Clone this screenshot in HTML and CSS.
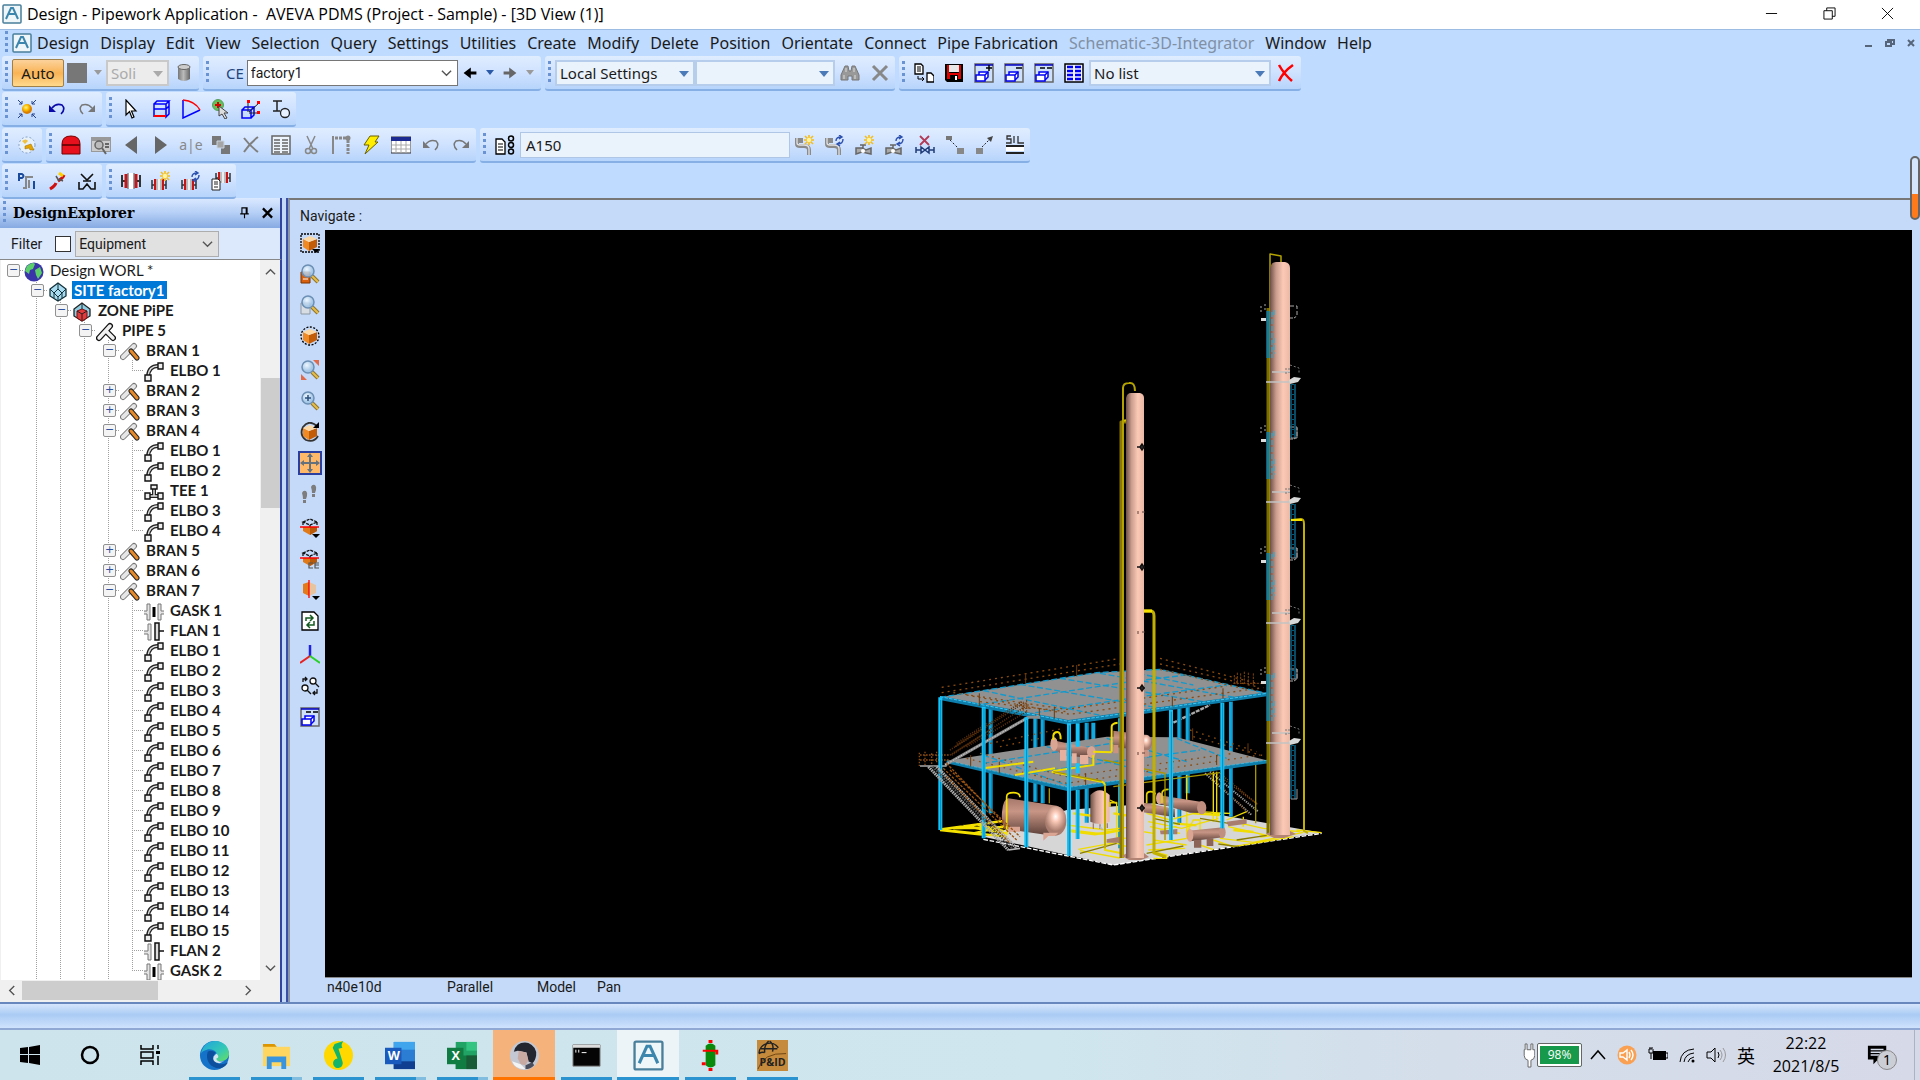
FILE: index.html
```
<!DOCTYPE html>
<html lang="en">
<head>
	<meta charset="UTF-8">
	<meta name="viewport" content="width=device-width, initial-scale=1.0">
	<title>Design - Pipework Application - AVEVA PDMS (Project - Sample) - [3D View (1)]</title>
	<link rel="stylesheet" href="styles.css">
</head>
<body>

<!-- icon sprite -->
<svg class="sprite" aria-hidden="true">
	<defs>
		<linearGradient id="steel"><stop offset="0" stop-color="#777"/><stop offset=".45" stop-color="#bbb"/><stop offset="1" stop-color="#666"/></linearGradient>
		<linearGradient id="tower"><stop offset="0" stop-color="#6d4f46"/><stop offset=".3" stop-color="#c99c8c"/><stop offset=".65" stop-color="#fcc9b6"/><stop offset="1" stop-color="#eab9a6"/></linearGradient>
		<linearGradient id="vessel" x2="0" y2="1"><stop offset="0" stop-color="#a5796c"/><stop offset=".35" stop-color="#c89585"/><stop offset="1" stop-color="#5c4039"/></linearGradient>
		<radialGradient id="cap" cx=".5" cy=".35"><stop offset="0" stop-color="#fff"/><stop offset=".35" stop-color="#fbc9b7"/><stop offset="1" stop-color="#a87c6e"/></radialGradient>
		<radialGradient id="sunball" cx=".4" cy=".35"><stop offset="0" stop-color="#fff29a"/><stop offset=".5" stop-color="#ffc400"/><stop offset="1" stop-color="#d97c00"/></radialGradient>
		<radialGradient id="lens" cx=".4" cy=".35"><stop offset="0" stop-color="#f4fbff"/><stop offset="1" stop-color="#9fc3e4"/></radialGradient>
		<linearGradient id="edge1" x2="1" y2="1"><stop offset="0" stop-color="#1fa3e0"/><stop offset=".6" stop-color="#35c9b4"/><stop offset="1" stop-color="#6be05a"/></linearGradient>
	</defs>

	<symbol id="aveva" viewBox="0 0 20 20"><rect x="1" y="1" width="18" height="18" rx="1" fill="#eef6fa" stroke="#4a7f9b" stroke-width="1.5"/><path d="M4 15 9 4h2l5 11M6 10h8" fill="none" stroke="#3c86ad" stroke-width="2"/></symbol>
	<symbol id="cylinder" viewBox="0 0 20 20"><path d="M4 4v12q6 4 12 0V4z" fill="url(#steel)"/><ellipse cx="10" cy="4" rx="6" ry="2.5" fill="#ccc" stroke="#666"/></symbol>
	<symbol id="arrow-l" viewBox="0 0 20 20"><path d="M2 10 11 3v5h7v4h-7v5z"/></symbol>
	<symbol id="arrow-r" viewBox="0 0 20 20"><path d="M18 10 9 3v5H2v4h7v5z" fill="#666"/></symbol>
	<symbol id="binoculars" viewBox="0 0 20 20"><path d="M1 17v-5L5 3h3l1 5h2l1-5h3l4 9v5h-7v-4H8v4z" fill="#999" stroke="#777"/><path d="M4 12v4M15 12v4M6 5v4M14 5v4" stroke="#ddd"/></symbol>
	<symbol id="x-gray" viewBox="0 0 20 20"><path d="M3 3l14 14M17 3 3 17" stroke="#888" stroke-width="3"/></symbol>
	<symbol id="x-thin" viewBox="0 0 20 20"><path d="M3 3q6 8 14 14M17 2Q9 8 3 17" stroke="#808080" stroke-width="2" fill="none"/></symbol>
	<symbol id="x-red" viewBox="0 0 20 20"><path d="M3 2q5 9 13 16M17 2Q7 9 3 18" stroke="#f00" stroke-width="2.5" fill="none"/></symbol>
	<symbol id="copy" viewBox="0 0 20 20"><path d="M1 1h6l2 2v8H1z" fill="#fff" stroke="#000" stroke-width="1.3"/><path d="M3 4h4M3 6h4M3 8h4" stroke="#000"/><path d="M13 10h4l3 3v6h-7z" fill="#fff" stroke="#000" stroke-width="1.3"/><path d="M4 13v3h6m-2-2 2 2-2 2" fill="none" stroke="#000"/></symbol>
	<symbol id="floppy" viewBox="0 0 20 20"><path d="M1 1h18v18H3l-2-2z" fill="#000"/><path d="M3 2h2v8h10V2h2v14H3z" fill="#e00000"/><path d="M5 2h10v7H5z" fill="#e8e8e8"/><path d="M6 12h8v6H6z" fill="#000"/><path d="M11 13h2v4h-2z" fill="#fff"/></symbol>
	<symbol id="win" viewBox="0 0 20 20"><path d="M1 1h18v18H1z" fill="#cfe0fa" stroke="#666" stroke-width="1.5"/><path d="M1 2h18" stroke="#0000c8" stroke-width="1.5"/><path d="M5 12V9h9v5l-3 3" fill="#fff" stroke="#0000f0" stroke-width="1.5"/><path d="M2 12h9v6H2zM11 12l3-3" fill="#fff" stroke="#0000f0" stroke-width="1.5"/></symbol>
	<symbol id="win-add" viewBox="0 0 20 20"><use href="#win"/><path d="M12 5h6M15 2v6" stroke="#000" stroke-width="1.5"/></symbol>
	<symbol id="win-del" viewBox="0 0 20 20"><use href="#win"/><path d="M12 5h6" stroke="#000" stroke-width="1.5"/></symbol>
	<symbol id="win-all" viewBox="0 0 20 20"><use href="#win"/><path d="M6 5h5M13 5h5" stroke="#000" stroke-width="1.5"/></symbol>
	<symbol id="list-blue" viewBox="0 0 20 20"><path d="M1 1h18v18H1z" fill="#f0f5ff" stroke="#000" stroke-width="1.5"/><path d="M3 4h6M3 8h6M3 12h6M3 16h6M11 4h6M11 8h6M11 12h6M11 16h6" stroke="#0000f0" stroke-width="2.5"/></symbol>

	<symbol id="sun" viewBox="0 0 20 20"><circle cx="10" cy="10" r="5" fill="url(#sunball)"/><path d="M1 1l4 4M2 5h3V2M19 1l-4 4M18 5h-3V2M1 19l4-4M2 15h3v3M19 19l-4-4M18 15h-3v3" fill="none" stroke="#24418c"/></symbol>
	<symbol id="undo" viewBox="0 0 20 20"><path d="M5 9q4-5 10-3 4 4-1 9" fill="none" stroke="#0a0aa8" stroke-width="1.6"/><path d="M2 6v7h7z" fill="#0a0aa8"/></symbol>
	<symbol id="undo-g" viewBox="0 0 20 20"><path d="M5 9q4-5 10-3 4 4-1 9" fill="none" stroke="#777" stroke-width="1.5"/><path d="M2 6v7h7z" fill="#777"/></symbol>
	<symbol id="redo" viewBox="0 0 20 20"><path d="M15 9Q11 4 5 6q-4 4 1 9" fill="none" stroke="#777" stroke-width="1.5"/><path d="M18 6v7h-7z" fill="#777"/></symbol>
	<symbol id="cursor" viewBox="0 0 20 20"><path d="M5 1v15l3.5-3.5L11 19l2-1-2.5-6H15z" fill="#fff" stroke="#000" stroke-width="1.2"/></symbol>
	<symbol id="box-sel" viewBox="0 0 20 20"><path d="M3 5h12v5H3zM3 5l3-3h12l-3 3M18 2v13l-3 3V5M3 10v8M15 10l3-3" fill="none" stroke="#00f" stroke-width="1.5"/><path d="M3 17h12" stroke="#f00" stroke-width="2"/></symbol>
	<symbol id="fan" viewBox="0 0 20 20"><path d="M2 1v18l17-8" fill="none" stroke="#00f" stroke-width="1.5"/><path d="M2 1q12 1 17 10" fill="none" stroke="#f00" stroke-width="1.5"/></symbol>
	<symbol id="pick-add" viewBox="0 0 20 20"><circle cx="7" cy="6" r="5.5" fill="#5fc15a" stroke="#5a9e60"/><path d="M4 6h6M7 3v6" stroke="#d00" stroke-width="2"/><path d="M8 7v10l3-2 3 5 2-1-3-5h4z" fill="#ddd" stroke="#444"/></symbol>
	<symbol id="axes-box" viewBox="0 0 20 20"><path d="M1 11h9v8H1zM1 11l3-3h9l-3 3M13 8v8l-3 3" fill="none" stroke="#00f" stroke-width="1.5"/><path d="M7 13V3M8 13l10-9M8 14h10" stroke="#222" fill="none"/><path d="M6 1h3v3H6zM16 2h3v3h-3zM16 12h3v3h-3z" fill="#f00"/></symbol>
	<symbol id="i-o" viewBox="0 0 20 20"><path d="M2 2h9M6 2v10M2 12h7" stroke="#222" stroke-width="1.5"/><circle cx="14" cy="14" r="4.5" fill="#e7f1ff" stroke="#222" stroke-width="1.3"/></symbol>

	<symbol id="globe-key" viewBox="0 0 20 20"><circle cx="10" cy="10" r="8" fill="#e6f0fb" stroke="#7d9cc2" stroke-dasharray="2 2"/><path d="M5 6q4-3 6 0l-3 3z" fill="#f0c040"/><path d="M8 11l6-2 3 6h-4l-1-2-4 1z" fill="#e5a400" stroke="#9a6a00" stroke-width=".5"/></symbol>
	<symbol id="dome" viewBox="0 0 20 20"><path d="M1 19V9q0-8 9-8t9 8v10z" fill="#e8101c" stroke="#700"/><path d="M1 10h18" stroke="#500" stroke-width="1.5"/></symbol>
	<symbol id="find-win" viewBox="0 0 20 20"><path d="M0 2h20v15H0z" fill="#999"/><path d="M1 6h18v10H1z" fill="#ccc"/><circle cx="8" cy="10" r="4" fill="#bbb" stroke="#666" stroke-width="1.5"/><path d="M11 13l4 6M14 9h4M14 12h4" stroke="#666" stroke-width="2"/></symbol>
	<symbol id="tri-l" viewBox="0 0 20 20"><path d="M16 1v18L4 10z" fill="#666"/></symbol>
	<symbol id="tri-r" viewBox="0 0 20 20"><path d="M4 1v18l12-9z" fill="#666"/></symbol>
	<symbol id="squares" viewBox="0 0 20 20"><path d="M1 1h9v9H1zM10 10h9v9h-9z" fill="#777"/><path d="M6 6h7v7H6z" fill="#a5a5a5" stroke="#c9d4e2"/></symbol>
	<symbol id="table-g" viewBox="0 0 20 20"><path d="M1 1h18v18H1z" fill="#eef4fc" stroke="#666" stroke-width="1.5"/><path d="M3 5h6M3 8h6M3 11h6M3 14h6M3 17h6M11 5h6M11 8h6M11 11h6M11 14h6M11 17h6" stroke="#666" stroke-width="1.5"/></symbol>
	<symbol id="scissors" viewBox="0 0 20 20"><path d="M6 1l6 13M14 1 8 14" stroke="#888" stroke-width="1.5"/><circle cx="7" cy="16" r="2.5" fill="none" stroke="#888" stroke-width="1.5"/><circle cx="13" cy="16" r="2.5" fill="none" stroke="#888" stroke-width="1.5"/></symbol>
	<symbol id="dims" viewBox="0 0 20 20"><path d="M4 3h12M17 5v14" stroke="#888" stroke-width="3" stroke-dasharray="3 1"/><path d="M2 1v18" stroke="#888" stroke-width="2"/><circle cx="17" cy="3" r="2.5" fill="#888"/></symbol>
	<symbol id="bolt" viewBox="0 0 20 20"><path d="M9 1h9l-4 6h3L4 19l4-9H3z" fill="#ffee00" stroke="#6b6000"/></symbol>
	<symbol id="grid" viewBox="0 0 20 20"><path d="M0 2h20v16H0z" fill="#fff" stroke="#333"/><path d="M0 2h20v4H0z" fill="#1b2a90"/><path d="M1 10h18M1 14h18M5 6v12M10 6v12M15 6v12" stroke="#aaa"/></symbol>
	<symbol id="spec" viewBox="0 0 20 20"><path d="M1 4h6l3 3v12H1z" fill="#fff" stroke="#000" stroke-width="1.3"/><path d="M3 9h5M3 12h5M3 15h5" stroke="#000"/><g fill="none" stroke="#000" stroke-width="1.5"><circle cx="16" cy="3.5" r="2.5"/><circle cx="16" cy="10" r="2.5"/><circle cx="16" cy="16.5" r="2.5"/></g></symbol>
	<symbol id="star" viewBox="0 0 20 20"><path d="M14 0v10M9 5h10M10 1l8 8M18 1l-8 8" stroke="#f5bd18" stroke-width="1.6"/><circle cx="14" cy="5" r="2.2" fill="#fff4a0"/></symbol>
	<symbol id="cycle" viewBox="0 0 20 20"><path d="M11 6q0-4 5-4M14 0l3 2-3 2M18 4q0 5-5 5M15 7l-3 2 3 2" fill="none" stroke="#2c50ad" stroke-width="1.4"/></symbol>
	<symbol id="pipe-g" viewBox="0 0 20 20"><path d="M2 3v6q0 2 3 2h4q5 0 5 4v5M6 3v5" fill="none" stroke="#8a8a8a" stroke-width="4"/><path d="M2 3v5q0 2 3 2h4q5 0 5 4v6" fill="none" stroke="#e2e2e2" stroke-width="1.3"/></symbol>
	<symbol id="pipe-new" viewBox="0 0 20 20"><use href="#pipe-g"/><use href="#star"/></symbol>
	<symbol id="pipe-mod" viewBox="0 0 20 20"><use href="#pipe-g"/><use href="#cycle"/></symbol>
	<symbol id="valve" viewBox="0 0 20 20"><path d="M1 13v6l6-2 9 2v-6l-5 2-4-2zM8 14v-4M5 10h6" fill="#aaa" stroke="#666" stroke-width="1.5"/><circle cx="8" cy="16" r="2" fill="#fff"/></symbol>
	<symbol id="comp-new" viewBox="0 0 20 20"><use href="#valve"/><use href="#star"/></symbol>
	<symbol id="comp-mod" viewBox="0 0 20 20"><use href="#valve"/><use href="#cycle"/></symbol>
	<symbol id="comp-del" viewBox="0 0 20 20"><path d="M5 1l9 9M14 1 5 10" stroke="#b33a56" stroke-width="1.8"/><path d="M1 12v6M19 12v6M1 15h5M14 15h5M6 12v6l8-6v6z" fill="none" stroke="#203c78" stroke-width="1.5"/></symbol>
	<symbol id="drop" viewBox="0 0 20 20"><path d="M1 1h6v4H1z" fill="#777"/><path d="M5 5l9 9" stroke="#222" stroke-dasharray="2 2"/><path d="M12 13h7v6h-7z" fill="#888"/></symbol>
	<symbol id="rise" viewBox="0 0 20 20"><path d="M1 13h7v6H1z" fill="#888"/><path d="M7 12l9-9" stroke="#222" stroke-dasharray="2 1.5"/><path d="M12 3l6-2-2 6z" fill="#444"/></symbol>
	<symbol id="slope" viewBox="0 0 20 20"><path d="M6 1H2v3h4v4H1M9 1v7M13 1v7h6" fill="none" stroke="#333" stroke-width="1.3"/><path d="M1 11h18M1 18h18" stroke="#222" stroke-width="2"/><path d="M1 14h18" stroke="#fff" stroke-width="4"/></symbol>

	<symbol id="p-i" viewBox="0 0 20 20"><path d="M2 10V3h3q3 2 0 4H2" fill="none" stroke="#1a4a9c" stroke-width="2"/><path d="M6 17h3V6h7M12 17V9" fill="none" stroke="#888" stroke-width="2"/><path d="M17 10v8" stroke="#1a4a9c" stroke-width="2"/></symbol>
	<symbol id="break" viewBox="0 0 20 20"><path d="M3 18q5-3 6-6M11 10q5-3 6-6" stroke="#d01010" stroke-width="3" fill="none"/><path d="M9 5l3 5M12 8l4 2" stroke="#555" stroke-width="1.5"/><path d="M12 2l4 3" stroke="#ffd000" stroke-width="3"/></symbol>
	<symbol id="weld" viewBox="0 0 20 20"><path d="M4 3l6 6 6-6" fill="none" stroke="#111" stroke-width="1.6"/><path d="M2 11v7h4l4-5 4 5h4v-7" fill="none" stroke="#111" stroke-width="1.6"/><path d="M6 10h8" stroke="#111" stroke-width="1.5"/></symbol>
	<symbol id="flange" viewBox="0 0 20 20"><path d="M1 4v12M1 10h3" stroke="#333" stroke-width="2"/><path d="M5 3v14M15 3v14" stroke="#c81414" stroke-width="3"/><path d="M10 2v16" stroke="#fff" stroke-width="5"/><path d="M7 2v16M13 2v16" stroke="#555"/><path d="M19 4v12M16 10h3" stroke="#333" stroke-width="2"/></symbol>
	<symbol id="fl" viewBox="0 0 20 20"><path d="M1 9v9M1 14h3M15 9v9M12 14h3" stroke="#333" stroke-width="1.5"/><path d="M4 8v11M12 8v11" stroke="#c81414" stroke-width="2"/><path d="M8 8v11" stroke="#eee" stroke-width="5"/><path d="M6 8v11M10 8v11" stroke="#888"/></symbol>
	<symbol id="fl-new" viewBox="0 0 20 20"><use href="#fl"/><use href="#star"/></symbol>
	<symbol id="fl-mod" viewBox="0 0 20 20"><use href="#fl"/><use href="#cycle"/></symbol>
	<symbol id="fl-doc" viewBox="0 0 20 20"><use href="#fl" x="4" y="-7"/><path d="M1 8h6l2 2v9H1z" fill="#fff" stroke="#222"/><path d="M3 11h4M3 13h4M3 16h4" stroke="#222"/></symbol>

	<symbol id="pin" viewBox="0 0 12 14"><path d="M3 1h6v7H3zM1 8h10M6 8v5M8 1v7" fill="none" stroke="#000" stroke-width="1.3"/></symbol>
	<symbol id="close" viewBox="0 0 12 12"><path d="M1 1l10 10M11 1 1 11" stroke="#000" stroke-width="2.5"/></symbol>
	<symbol id="chev" viewBox="0 0 12 12"><path d="M1 3l5 5 5-5" fill="none" stroke="#555" stroke-width="1.5"/></symbol>

	<symbol id="world" viewBox="0 0 20 20"><circle cx="10" cy="10" r="9.5" fill="#3a35a8"/><path d="M3 4q6-5 8-2L9 7l-3 1-1 4-4-3zM11 8l5-3 2 6-4 6-2-4z" fill="#5bd06a"/></symbol>
	<symbol id="site" viewBox="0 0 20 20"><path d="M10 1 2 7v7l8 5 8-5V7z" fill="#a9dcf0" stroke="#12303a" stroke-width="1.3"/><path d="M10 1v6L6 11 2 7M10 7l4 4 4-4M6 11v5M14 11v5M6 11l4 4 4-4M10 15v4" fill="none" stroke="#12303a"/></symbol>
	<symbol id="zone" viewBox="0 0 20 20"><path d="M10 1 2 7v7l8 5 8-5V7z" fill="#8ecde2" stroke="#222" stroke-width="1.3"/><path d="M5 9l5-2 5 2v7l-5 3-5-3z" fill="#e33b3b" stroke="#7a1111"/><path d="M10 1v6M5 9l5 3 5-3M10 12v6" fill="none" stroke="#222"/></symbol>
	<symbol id="pipe" viewBox="0 0 20 20"><path d="M3 16 14 4M10 9l7 7" stroke="#111" stroke-width="6" stroke-linecap="round"/><path d="M3 16 14 4M10 9l7 7" stroke="#f1f1f1" stroke-width="3.5" stroke-linecap="round"/></symbol>
	<symbol id="bran" viewBox="0 0 20 20"><path d="M3 15 14 4" stroke="#777" stroke-width="6" stroke-linecap="round"/><path d="M3 15 14 4" stroke="#e6e6e6" stroke-width="4" stroke-linecap="round"/><path d="M11 9l6 7" stroke="#222" stroke-width="5" stroke-linecap="round"/><path d="M11 9l6 7" stroke="#e58a2a" stroke-width="3" stroke-linecap="round"/></symbol>
	<symbol id="elbo" viewBox="0 0 20 20"><path d="M4 14Q5 4 14 4" fill="none" stroke="#222" stroke-width="4"/><path d="M4 14Q5 4 14 4" fill="none" stroke="#ddd" stroke-width="1.5"/><path d="M1 13h6v6H1zM14 1h5v6h-5z" fill="#eee" stroke="#111" stroke-width="1.4"/></symbol>
	<symbol id="tee" viewBox="0 0 20 20"><path d="M6 14h8M10 6v8" stroke="#222" stroke-width="4"/><path d="M6 14h8M10 6v8" stroke="#ddd" stroke-width="1.5"/><path d="M1 11h5v6H1zM14 11h5v6h-5zM7 3h6v4H7z" fill="#eee" stroke="#111" stroke-width="1.4"/></symbol>
	<symbol id="gask" viewBox="0 0 20 20"><path d="M0 9h3V2h3v16H3v-6H0M20 9h-3V2h-3v16h3v-6h3" fill="#e4e4e4" stroke="#777"/><path d="M10 5v10" stroke="#000" stroke-width="3"/></symbol>
	<symbol id="flan" viewBox="0 0 20 20"><path d="M0 9h4V2h3v16H4v-6H0" fill="#e4e4e4" stroke="#777"/><path d="M11 1h4v17h-4zM15 9h5" fill="#ddd" stroke="#111" stroke-width="1.5"/></symbol>

	<symbol id="cube" viewBox="0 0 20 20"><path d="M3 6v8l6 4V9z" fill="#f08a24"/><path d="M9 9v9l8-4V6z" fill="#c25c08"/><path d="M3 6l7-3 7 3-8 3z" fill="#ffd9a3"/></symbol>
	<symbol id="glass" viewBox="0 0 20 20"><path d="M12 12l6 6" stroke="#8f7430" stroke-width="4"/><path d="M12 12l6 6" stroke="#e6bd48" stroke-width="2"/><circle cx="8" cy="7" r="6" fill="url(#lens)" fill-opacity=".85" stroke="#6c8fb4" stroke-width="1.5"/></symbol>
	<symbol id="v-fence" viewBox="0 0 20 20"><path d="M1 1h18v18H1z" fill="none" stroke="#000" stroke-width="1.3" stroke-dasharray="2 1"/><use href="#cube"/><path d="M12 16h8l-4 4z"/></symbol>
	<symbol id="v-zoombox" viewBox="0 0 20 20"><path d="M1 8h9v11H1z" fill="#d9600c" stroke="#7c3500"/><path d="M3 15h5" stroke="#fff"/><use href="#glass"/></symbol>
	<symbol id="v-zoomdoc" viewBox="0 0 20 20"><path d="M1 8h9v11H1z" fill="#d8dde4" stroke="#8d97a3"/><use href="#glass"/></symbol>
	<symbol id="v-round" viewBox="0 0 20 20"><circle cx="10" cy="10" r="9" fill="none" stroke="#000" stroke-width="1.3" stroke-dasharray="2 1.5"/><use href="#cube"/></symbol>
	<symbol id="v-extents" viewBox="0 0 20 20"><path d="M13 0h6v6zM1 14v6h6z" fill="#e0694a"/><use href="#glass"/></symbol>
	<symbol id="v-zoom" viewBox="0 0 20 20"><use href="#glass"/><path d="M5 7h6M8 4v6" stroke="#2b4f7c" stroke-width="1.5"/></symbol>
	<symbol id="v-rotate" viewBox="0 0 20 20"><path d="M17 4Q9-3 3 5q-4 8 3 13 8 3 12-4" fill="none" stroke="#333" stroke-width="1.8"/><use href="#cube"/><path d="M19 0v6h-6z"/></symbol>
	<symbol id="v-pan" viewBox="0 0 20 20"><path d="M10 3v14M3 10h14" stroke="#66717e" stroke-width="2"/><path d="M10 0l3 4H7zM10 20l3-4H7zM0 10l4-3v6zM20 10l-4-3v6z" fill="#66717e"/></symbol>
	<symbol id="v-walk" viewBox="0 0 20 20"><path d="M11 3q1-3 4-2 2 2 1 5l-1 3h-3q0-3-1-6zM2 9q1-3 4-2 2 2 1 5l-1 3H3q0-3-1-6zM12 10h3v3h-3zM3 16h3v3H3z" fill="#7d7d7d"/></symbol>
	<symbol id="v-clip" viewBox="0 0 20 20"><path d="M3 9v4l7 4 7-4V9z" fill="#e07a18"/><path d="M10 9v8l7-4V9z" fill="#b95a0a"/><path d="M3 4l7-3 7 3-7 3zM3 4v4M17 4v4M10 7v2" fill="none" stroke="#111" stroke-width="1.3" stroke-dasharray="3 1"/><path d="M0 9h19" stroke="#f00" stroke-width="1.5"/></symbol>
	<symbol id="v-clipdrop" viewBox="0 0 20 20"><use href="#v-clip"/><path d="M12 16h8l-4 4z"/></symbol>
	<symbol id="v-clipce" viewBox="0 0 20 20"><use href="#v-clip"/><path d="M13 14H9v5h4M19 14h-4v5h4M15 16h4" fill="none" stroke="#555" stroke-width="1.2"/></symbol>
	<symbol id="v-section" viewBox="0 0 20 20"><path d="M3 4l6-2v14l-6-3z" fill="#e57a1a"/><path d="M9 2l7 3v8l-7 3z" fill="#e8c3a0"/><path d="M9 0v18" stroke="#f00" stroke-width="1.3"/><path d="M12 16h8l-4 4z"/></symbol>
	<symbol id="v-refresh" viewBox="0 0 20 20"><path d="M2 1h12l4 4v14H2z" fill="#fff" stroke="#000" stroke-width="1.3"/><path d="M6 10V7h6M10 4l3 3-3 3M14 10v4H8M10 11l-3 3 3 3" fill="none" stroke="#145a20" stroke-width="1.5"/></symbol>
	<symbol id="v-axes" viewBox="0 0 20 20"><path d="M10 11V0" stroke="#2020e0" stroke-width="2.5"/><path d="M10 11 0 18" stroke="#e82020" stroke-width="2"/><path d="M10 11l10 7" stroke="#28d028" stroke-width="2"/></symbol>
	<symbol id="v-links" viewBox="0 0 20 20"><g fill="#fff" stroke="#111" stroke-width="1.3"><circle cx="13" cy="5" r="3"/><circle cx="5" cy="12" r="3"/><path d="M15 7l4 4M7 14l4 4M3 6V3h4M5 1l2 2-2 2M17 13v4h-4M15 15l-2 2 2 2" fill="none"/></g></symbol>
</svg>

<header class="titlebar">
	<svg class="ico"><use href="#aveva"/></svg>
	<h1>Design - Pipework Application - &nbsp;AVEVA PDMS (Project - Sample) - [3D View (1)]</h1>
	<div class="winctl">
		<button aria-label="Minimize"><svg viewBox="0 0 14 14"><path d="M1 7h12"/></svg></button>
		<button aria-label="Restore"><svg viewBox="0 0 14 14"><path d="M1 4h9v9H1zM4 4V1h9v9h-3"/></svg></button>
		<button aria-label="Close"><svg viewBox="0 0 14 14"><path d="M1 1l12 12M13 1 1 13"/></svg></button>
	</div>
</header>

<nav class="menubar">
	<i class="grip"></i>
	<svg class="ico"><use href="#aveva"/></svg>
	<button>Design</button>
	<button>Display</button>
	<button>Edit</button>
	<button>View</button>
	<button>Selection</button>
	<button>Query</button>
	<button>Settings</button>
	<button>Utilities</button>
	<button>Create</button>
	<button>Modify</button>
	<button>Delete</button>
	<button>Position</button>
	<button>Orientate</button>
	<button>Connect</button>
	<button>Pipe Fabrication</button>
	<button disabled>Schematic-3D-Integrator</button>
	<button>Window</button>
	<button>Help</button>
	<div class="mdictl">
		<svg viewBox="0 0 10 10"><path d="M1 8h7"/></svg>
		<svg viewBox="0 0 10 10"><path d="M1 4h5v4H1zM3 4V2h6v4H7"/></svg>
		<svg viewBox="0 0 10 10"><path d="M2 2l6 6M8 2 2 8"/></svg>
	</div>
</nav>

<div class="toolbars">
	<div class="row">
		<div class="bar">
			<i class="grip"></i>
			<button class="auto">Auto</button>
			<button class="swatch" aria-label="Colour"></button>
			<i class="dd off"></i>
			<span class="combo off soli"><select aria-label="Representation" disabled><option>Soli</option></select></span>
			<button class="tb" aria-label="Cylinder"><svg><use href="#cylinder"/></svg></button>
		</div>
		<div class="bar ce">
			<i class="grip"></i>
			<label for="ce">CE</label>
			<span class="cebox"><select id="ce"><option>factory1</option></select><svg><use href="#chev"/></svg></span>
			<button class="tb sm" aria-label="Back"><svg><use href="#arrow-l"/></svg></button><i class="dd"></i>
			<button class="tb sm" aria-label="Forward"><svg><use href="#arrow-r"/></svg></button><i class="dd off"></i>
		</div>
		<div class="bar">
			<i class="grip"></i>
			<span class="combo local"><select aria-label="Settings"><option>Local Settings</option></select></span>
			<span class="combo local"><select aria-label="Search"><option></option></select></span>
			<button class="tb" aria-label="Find"><svg><use href="#binoculars"/></svg></button>
			<button class="tb" aria-label="Clear"><svg><use href="#x-gray"/></svg></button>
		</div>
		<div class="bar">
			<i class="grip"></i>
			<button class="tb" aria-label="Copy"><svg><use href="#copy"/></svg></button>
			<button class="tb" aria-label="Save"><svg><use href="#floppy"/></svg></button>
			<button class="tb" aria-label="Add to view"><svg><use href="#win-add"/></svg></button>
			<button class="tb" aria-label="Remove from view"><svg><use href="#win-del"/></svg></button>
			<button class="tb" aria-label="Remove all"><svg><use href="#win-all"/></svg></button>
			<button class="tb" aria-label="Lists"><svg><use href="#list-blue"/></svg></button>
			<span class="combo nolist"><select aria-label="List"><option>No list</option></select></span>
			<button class="tb" aria-label="Delete list"><svg><use href="#x-red"/></svg></button>
		</div>
	</div>
	<div class="row">
		<div class="bar">
			<i class="grip"></i>
			<button class="tb" aria-label="Centre"><svg><use href="#sun"/></svg></button>
			<button class="tb" aria-label="Undo"><svg><use href="#undo"/></svg></button>
			<button class="tb" aria-label="Redo"><svg><use href="#redo"/></svg></button>
		</div>
		<div class="bar">
			<i class="grip"></i>
			<button class="tb" aria-label="Select"><svg><use href="#cursor"/></svg></button>
			<button class="tb" aria-label="Box"><svg><use href="#box-sel"/></svg></button>
			<button class="tb" aria-label="Arc"><svg><use href="#fan"/></svg></button>
			<button class="tb" aria-label="Pick"><svg><use href="#pick-add"/></svg></button>
			<button class="tb" aria-label="Axes"><svg><use href="#axes-box"/></svg></button>
			<button class="tb" aria-label="Measure"><svg><use href="#i-o"/></svg></button>
		</div>
	</div>
	<div class="row">
		<div class="bar">
			<i class="grip"></i>
			<button class="tb" aria-label="Web"><svg><use href="#globe-key"/></svg></button>
		</div>
		<div class="bar">
			<i class="grip"></i>
			<button class="tb" aria-label="Insulation"><svg><use href="#dome"/></svg></button>
			<button class="tb" aria-label="Find"><svg><use href="#find-win"/></svg></button>
			<button class="tb" aria-label="Previous"><svg><use href="#tri-l"/></svg></button>
			<button class="tb" aria-label="Next"><svg><use href="#tri-r"/></svg></button>
			<button class="tb rename">a|e</button>
			<button class="tb" aria-label="Arrange"><svg><use href="#squares"/></svg></button>
			<button class="tb" aria-label="Delete"><svg><use href="#x-thin"/></svg></button>
			<button class="tb" aria-label="Table"><svg><use href="#table-g"/></svg></button>
			<button class="tb" aria-label="Cut"><svg><use href="#scissors"/></svg></button>
			<button class="tb" aria-label="Dimensions"><svg><use href="#dims"/></svg></button>
			<button class="tb" aria-label="Quick"><svg><use href="#bolt"/></svg></button>
			<button class="tb" aria-label="Grid"><svg><use href="#grid"/></svg></button>
			<button class="tb" aria-label="Undo"><svg><use href="#undo-g"/></svg></button>
			<button class="tb" aria-label="Redo"><svg><use href="#redo"/></svg></button>
		</div>
		<div class="bar">
			<i class="grip"></i>
			<button class="tb" aria-label="Specification"><svg><use href="#spec"/></svg></button>
			<input class="spec" type="text" aria-label="Specification name" value="A150">
			<button class="tb" aria-label="New pipe"><svg><use href="#pipe-new"/></svg></button>
			<button class="tb" aria-label="Modify pipe"><svg><use href="#pipe-mod"/></svg></button>
			<button class="tb" aria-label="New component"><svg><use href="#comp-new"/></svg></button>
			<button class="tb" aria-label="Modify component"><svg><use href="#comp-mod"/></svg></button>
			<button class="tb" aria-label="Delete component"><svg><use href="#comp-del"/></svg></button>
			<button class="tb" aria-label="Connect down"><svg><use href="#drop"/></svg></button>
			<button class="tb" aria-label="Connect up"><svg><use href="#rise"/></svg></button>
			<button class="tb" aria-label="Slope"><svg><use href="#slope"/></svg></button>
		</div>
	</div>
	<div class="row">
		<div class="bar">
			<i class="grip"></i>
			<button class="tb" aria-label="Pipe insert"><svg><use href="#p-i"/></svg></button>
			<button class="tb" aria-label="Split"><svg><use href="#break"/></svg></button>
			<button class="tb" aria-label="Weld"><svg><use href="#weld"/></svg></button>
		</div>
		<div class="bar">
			<i class="grip"></i>
			<button class="tb" aria-label="Flange"><svg><use href="#flange"/></svg></button>
			<button class="tb" aria-label="New flange"><svg><use href="#fl-new"/></svg></button>
			<button class="tb" aria-label="Modify flange"><svg><use href="#fl-mod"/></svg></button>
			<button class="tb" aria-label="Flange report"><svg><use href="#fl-doc"/></svg></button>
		</div>
	</div>
	<i class="slider"></i>
</div>

<main class="work">
	<aside class="dock">
		<div class="dock-head">
			<i class="grip"></i>
			<h2>DesignExplorer</h2>
			<button aria-label="Pin"><svg><use href="#pin"/></svg></button>
			<button aria-label="Close"><svg><use href="#close"/></svg></button>
		</div>
		<div class="filter">
			<label for="filter">Filter</label>
			<input type="checkbox" id="filter">
			<span class="fbox"><select aria-label="Filter type"><option>Equipment</option></select><svg><use href="#chev"/></svg></span>
		</div>
		<div class="explorer">
			<ul class="tree">
				<li><div><b class="box"></b><svg><use href="#world"/></svg><span class="root">Design WORL *</span></div>
				<ul><li><div><b class="box"></b><svg><use href="#site"/></svg><span class="sel">SITE factory1</span></div>
				<ul><li><div><b class="box"></b><svg><use href="#zone"/></svg><span>ZONE PiPE</span></div>
				<ul><li><div><b class="box"></b><svg><use href="#pipe"/></svg><span>PIPE 5</span></div>
				<ul>
					<li><div><b class="box"></b><svg><use href="#bran"/></svg><span>BRAN 1</span></div>
						<ul>
							<li class="last"><div><b></b><svg><use href="#elbo"/></svg><span>ELBO 1</span></div></li>
						</ul>
					</li>
					<li><div><b class="box plus"></b><svg><use href="#bran"/></svg><span>BRAN 2</span></div></li>
					<li><div><b class="box plus"></b><svg><use href="#bran"/></svg><span>BRAN 3</span></div></li>
					<li><div><b class="box"></b><svg><use href="#bran"/></svg><span>BRAN 4</span></div>
						<ul>
							<li><div><b></b><svg><use href="#elbo"/></svg><span>ELBO 1</span></div></li>
							<li><div><b></b><svg><use href="#elbo"/></svg><span>ELBO 2</span></div></li>
							<li><div><b></b><svg><use href="#tee"/></svg><span>TEE 1</span></div></li>
							<li><div><b></b><svg><use href="#elbo"/></svg><span>ELBO 3</span></div></li>
							<li class="last"><div><b></b><svg><use href="#elbo"/></svg><span>ELBO 4</span></div></li>
						</ul>
					</li>
					<li><div><b class="box plus"></b><svg><use href="#bran"/></svg><span>BRAN 5</span></div></li>
					<li><div><b class="box plus"></b><svg><use href="#bran"/></svg><span>BRAN 6</span></div></li>
					<li><div><b class="box"></b><svg><use href="#bran"/></svg><span>BRAN 7</span></div>
						<ul>
							<li><div><b></b><svg><use href="#gask"/></svg><span>GASK 1</span></div></li>
							<li><div><b></b><svg><use href="#flan"/></svg><span>FLAN 1</span></div></li>
							<li><div><b></b><svg><use href="#elbo"/></svg><span>ELBO 1</span></div></li>
							<li><div><b></b><svg><use href="#elbo"/></svg><span>ELBO 2</span></div></li>
							<li><div><b></b><svg><use href="#elbo"/></svg><span>ELBO 3</span></div></li>
							<li><div><b></b><svg><use href="#elbo"/></svg><span>ELBO 4</span></div></li>
							<li><div><b></b><svg><use href="#elbo"/></svg><span>ELBO 5</span></div></li>
							<li><div><b></b><svg><use href="#elbo"/></svg><span>ELBO 6</span></div></li>
							<li><div><b></b><svg><use href="#elbo"/></svg><span>ELBO 7</span></div></li>
							<li><div><b></b><svg><use href="#elbo"/></svg><span>ELBO 8</span></div></li>
							<li><div><b></b><svg><use href="#elbo"/></svg><span>ELBO 9</span></div></li>
							<li><div><b></b><svg><use href="#elbo"/></svg><span>ELBO 10</span></div></li>
							<li><div><b></b><svg><use href="#elbo"/></svg><span>ELBO 11</span></div></li>
							<li><div><b></b><svg><use href="#elbo"/></svg><span>ELBO 12</span></div></li>
							<li><div><b></b><svg><use href="#elbo"/></svg><span>ELBO 13</span></div></li>
							<li><div><b></b><svg><use href="#elbo"/></svg><span>ELBO 14</span></div></li>
							<li><div><b></b><svg><use href="#elbo"/></svg><span>ELBO 15</span></div></li>
							<li><div><b></b><svg><use href="#flan"/></svg><span>FLAN 2</span></div></li>
							<li class="last"><div><b></b><svg><use href="#gask"/></svg><span>GASK 2</span></div></li>
						</ul>
					</li>
				</ul></li></ul></li></ul></li></ul></li>
			</ul>
			<div class="vscroll"><svg class="up"><use href="#chev"/></svg><i></i><svg><use href="#chev"/></svg></div>
			<div class="hscroll"><svg class="left"><use href="#chev"/></svg><i></i><svg class="right"><use href="#chev"/></svg></div>
		</div>
	</aside>

	<section class="view">
		<div class="nav-label">Navigate :</div>
		<div class="view-tools">
			<button aria-label="Fence"><svg><use href="#v-fence"/></svg></button>
			<button aria-label="Zoom to selection"><svg><use href="#v-zoombox"/></svg></button>
			<button aria-label="Zoom to drawlist"><svg><use href="#v-zoomdoc"/></svg></button>
			<button aria-label="Limits"><svg><use href="#v-round"/></svg></button>
			<button class="gap" aria-label="Extents"><svg><use href="#v-extents"/></svg></button>
			<button aria-label="Zoom"><svg><use href="#v-zoom"/></svg></button>
			<button aria-label="Rotate"><svg><use href="#v-rotate"/></svg></button>
			<button class="on" aria-label="Pan"><svg><use href="#v-pan"/></svg></button>
			<button aria-label="Walk"><svg><use href="#v-walk"/></svg></button>
			<button class="gap" aria-label="Clip"><svg><use href="#v-clipdrop"/></svg></button>
			<button aria-label="Clip CE"><svg><use href="#v-clipce"/></svg></button>
			<button aria-label="Section"><svg><use href="#v-section"/></svg></button>
			<button aria-label="Refresh"><svg><use href="#v-refresh"/></svg></button>
			<button class="gap" aria-label="Axes"><svg><use href="#v-axes"/></svg></button>
			<button aria-label="Links"><svg><use href="#v-links"/></svg></button>
			<button aria-label="Views"><svg><use href="#win-all"/></svg></button>
		</div>
		<div class="canvas">
			<svg viewBox="325 230 1587 747" role="img" aria-label="3D plant model">
				<!-- structure, drawn in thirds of a unit -->
				<g transform="translate(900 640) scale(.33333)">
					<!-- ground slab -->
					<path d="M250 590 500 510 760 490 1265 578 640 675z" fill="#d6d6d6"/>
					<path d="M120 568 310 543M130 570l190 20M160 565l160-4M190 558l130 22M120 570l125 14M340 545l-60 25M230 553l80 20M220 580l110-25" stroke="#f5e100" stroke-width="7" fill="none"/>
					<path d="M250 598 640 675 1265 580" stroke="#fff" stroke-width="4" fill="none" stroke-dasharray="14 5"/>

					<!-- stairs behind -->
					<path d="M915 400l140 125M930 395l145 120" stroke="#999" stroke-width="6" stroke-dasharray="4 3"/>
					<path d="M940 395l135 100M960 400l110 90M925 400l120 120" stroke="#8a4a10" stroke-width="4" stroke-dasharray="3 4"/>
					<path d="M820 248 930 195" stroke="#aaa" stroke-width="7" stroke-dasharray="12 3"/>

					<!-- back columns -->
					<g stroke="#12a9e0" stroke-width="12">
						<path d="M272 200v320M406 230v255M428 235v255M560 248v300M580 248v60M838 205v350M863 200v260M993 185v345M660 235v390"/>
					</g>
					<g stroke="#075a80" stroke-width="2"><path d="M276 200v320M410 230v255M432 235v255M564 248v300M842 205v350M867 200v260M997 185v345"/></g>

					<!-- ground piping -->
					<g fill="none" stroke="#f0dc00" stroke-width="4">
						<path d="M500 555l120 15 80-10M510 570l100 12 60-12M535 628l110-20 60 20M540 632l120 22M620 605l80-15M740 520l70 20 90-25 90 5M745 545l100 20 110-30M750 560l90 20M760 600l100 15M740 615l120-20v-190M745 630l110-5M860 580l20-40h20v25M900 560v55l40 14M940 600l60 20 180-30M960 595l100 12 150-30M1000 545l90 20 110 10M985 560l110 25M1030 530v30M980 540l60-25M760 655h40v-10l-30-8M1190 570l75 8M950 395v150M940 395v150M630 480l20 10v110M860 410v180M700 570l60 10M780 570l50-10"/>
						<path d="M510 573l75 10 70-12M520 520l60 8M640 520l50 8M820 550l70 6M880 520l80 5M1000 570l60 6M1080 590l100-14" stroke-width="7"/>
						<path d="M540 640l110-30M740 640l110-22M955 612l60 8M760 535l80 18M900 535l90 16M1010 600l90-14" stroke="#8a7d00"/>
					</g>

					<!-- equipment on the ground -->
					<path d="M325 475 470 497q30 8 28 45-3 40-40 45l-140-20q-15-10-12-50 3-40 19-42z" fill="url(#vessel)"/>
					<ellipse cx="467" cy="543" rx="32" ry="44" fill="url(#cap)"/>
					<path d="M430 578h45l-10 10h-20l-15 14zM325 560h35v15h-35z" fill="#dba593"/>
					<path d="M320 585V470q0-12 20-12t20 14" fill="none" stroke="#f5e100" stroke-width="5"/>
					<path d="M571 465q28-28 58 0v80q-30 14-58 0z" fill="url(#tower)"/>
					<path d="M580 550v16M600 553v14M622 550v14" stroke="#a87c6e" stroke-width="4"/>
					<path d="M775 465l135 22v32l-40-1-95-28z" fill="url(#vessel)"/>
					<ellipse cx="905" cy="503" rx="14" ry="20" fill="#c08f80"/><ellipse cx="778" cy="475" rx="10" ry="18" fill="#dba593"/>
					<path d="M720 486l105 20v26l-100-16z" fill="url(#vessel)"/>
					<path d="M865 572l105-10v30l-100 12z" fill="url(#vessel)"/>
					<ellipse cx="870" cy="586" rx="10" ry="19" fill="#dba593"/><ellipse cx="967" cy="577" rx="10" ry="18" fill="#c08f80"/>
					<path d="M882 600h22v23h-22zM920 595h20v23h-20z" fill="#8c6458"/>
					<path d="M620 598l40-8v18h-40zM980 545l60-8v14l-55 8zM780 572l52-5v16h-50z" fill="#a87c6e"/>
					<path d="M740 490v-25q0-10 12-10t14 8M786 490v-30q0-12 20-12M630 500v-12h22" fill="none" stroke="#e6d200" stroke-width="5"/>

					<!-- middle floor -->
					<path d="M140 362 250 345 620 290 830 292 1105 362 505 450z" fill="#919191"/>
					<path d="M760 248v40h70z" fill="#000"/>
					<g fill="none" stroke="#1499cc" stroke-width="4" stroke-dasharray="18 8">
						<path d="M250 370 700 300M380 400 900 330M250 345l255 92M440 320l320 80M620 295l240 70M830 295l150 60"/>
					</g>
					<path d="M140 362 505 442 1105 360v10L505 454 140 370z" fill="#0e7fac"/>
					<path d="M140 362 505 442 1105 360" fill="none" stroke="#3cc8f5" stroke-width="2" stroke-dasharray="10 4"/>
					<path d="M200 355l300 75 580-85M240 340l260 70 500-70M870 270l200 65M880 290l220 60M300 320l120-25M270 310l220-45" fill="none" stroke="#8a4c12" stroke-width="4" stroke-dasharray="5 14"/>
					<path d="M212 345v35M298 365v35M557 400v35M878 265v35M950 345v30M1044 310v30" stroke="#6b3808" stroke-width="3"/>

					<!-- middle floor equipment -->
					<path d="M455 300l120 25v28l-80-6-35-20z" fill="url(#vessel)"/>
					<ellipse cx="462" cy="312" rx="11" ry="20" fill="#dba593"/><ellipse cx="574" cy="336" rx="13" ry="18" fill="#d8a594"/>
					<path d="M480 330h20v32h-20zM515 340h15v30h-15zM540 345h25v27h-25z" fill="#e5b09e"/>
					<path d="M640 272l95 12q22 5 20 26-2 22-22 22l-93-12z" fill="url(#vessel)"/>
					<ellipse cx="738" cy="308" rx="17" ry="24" fill="url(#cap)"/>
					<path d="M712 330h35v20h-35zM640 315h15v25h-15z" fill="#c99384"/>
					<path d="M460 300v-14q2-10 12-10t10 22M635 335v-75q0-10 18-12M580 335l55 2M580 345v30l-120 18M345 405l120-20M250 385l150-20M455 395l150 30q10 2 10 15v190l50 10" fill="none" stroke="#f0dc00" stroke-width="6"/>
					<path d="M460 395l145 28M615 435v190M610 360l60 12M725 385l70 15v200M1067 375v175M640 440l320-42M448 445v45" fill="none" stroke="#a89600" stroke-width="4"/>

					<!-- roof -->
					<path d="M120 172 590 98 780 88 1100 160 505 248z" fill="#919191"/>
					<g fill="none" stroke="#1499cc" stroke-width="4" stroke-dasharray="18 8">
						<path d="M120 172 590 98 780 88 1100 160M250 192 690 125 860 105M380 222 790 160 980 135M250 152l380 80M360 133l440 75M480 115l460 75M600 100l420 75M690 95l190 40"/>
					</g>
					<path d="M120 168 505 240 1100 157v12L505 254 120 180z" fill="#0e7fac"/>
					<path d="M120 170 505 244 1100 160" fill="none" stroke="#3cc8f5" stroke-width="3" stroke-dasharray="10 4"/>
					<g fill="none" stroke="#8a4c12" stroke-width="4" stroke-dasharray="6 12">
						<path d="M125 142 650 57M125 158 660 72M780 55l290 75M780 72l290 68M780 88l260 60M200 165l310 58 580-80M160 158l340 50 480-70M240 185l260 30"/>
					</g>
					<path d="M238 160v38M377 100v30M530 75v34M418 205v30M463 200v36M817 170v30M969 145v30" stroke="#6b3808" stroke-width="3"/>
					<path d="M1003 105v30M1012 98v35M1022 100v32M1033 95v40M1045 98v35M1060 100v40M1000 130h90M360 195h30M365 205h30M370 185v30M380 180v40" stroke="#7c420e" stroke-width="3" stroke-dasharray="7 3"/>

					<!-- front stairs -->
					<path d="M150 330 370 190M155 345 375 200M165 320 365 185M200 320 380 215M170 310l90-60M150 345l120-75" stroke="#5d300a" stroke-width="5" stroke-dasharray="3 4"/>
					<path d="M135 375 385 232h35" fill="none" stroke="#8b8b8b" stroke-width="9"/>
					<path d="M135 375 385 232" stroke="#ccc" stroke-width="3" stroke-dasharray="5 4"/>
					<path d="M60 345h90M58 338v40M75 335v40M95 340v35M110 335v35M60 360h90" stroke="#8a4c12" stroke-width="4" stroke-dasharray="5 4"/>
					<path d="M60 378h80" stroke="#999" stroke-width="5"/>

					<!-- front columns -->
					<g stroke="#14c4fb" stroke-width="12">
						<path d="M121 172v398M251 200v395M379 232v390M507 250v397M533 250v70M533 370v30M533 450v147M813 210v390M967 188v377"/>
					</g>
					<g stroke="#076a92" stroke-width="2"><path d="M122 180v388M252 205v390M380 240v380M508 256v390M814 215v385M968 190v375M534 450v147"/></g>

					<path d="M85 380 325 630M110 380 350 625" stroke="#a8a8a8" stroke-width="9" stroke-dasharray="5 2"/>
					<path d="M98 380 338 627" stroke="#555" stroke-width="7" stroke-dasharray="5 3"/>
					<path d="M130 385 350 600M150 390 360 590M140 410 330 610M140 370 320 560" stroke="#9a5312" stroke-width="4" stroke-dasharray="8 4"/>
					<path d="M325 630l35-5M600 560l8 10" stroke="#bbb" stroke-width="5"/>
				</g>

				<!-- pipes beside the towers -->
				<g fill="none" stroke-linejoin="round">
					<path d="M1121 858V422h5" stroke="#8a7600" stroke-width="3"/>
					<path d="M1122 421l6-1" stroke="#d6c400" stroke-width="2"/>
					<path d="M1123 858V388q0-5 6-5 6-1 6 8" stroke="#b3a200" stroke-width="2"/>
					<path d="M1268 834V308" stroke="#7a6d00" stroke-width="3"/>
					<path d="M1270 834V254l11 2v6" stroke="#b3a200" stroke-width="1.5"/>
				</g>

				<!-- tower 1 -->
				<path d="M1122 856l5-3h17l5 4-8 3h-12z" fill="#b38474"/>
				<path d="M1126 858V398q1-5 5-5h9q4 1 4 5v460z" fill="url(#tower)"/>
				<path id="mark" d="M1140 447l2-3 2 3-2 3zm-3 0h8" fill="none" stroke="#111" stroke-width="1.5"/>
				<use href="#mark" y="120"/>
				<use href="#mark" y="241"/>
				<use href="#mark" y="361"/>
				<path d="M1138 511v3M1142 512h3M1138 631v3M1142 632h3M1138 752v3M1142 753h3" stroke="#5a4038"/>
				<path d="M1144 611h7q3 0 3 5v237l12 4" fill="none" stroke="#c2b000" stroke-width="3"/>
				<path d="M1144 611h8" stroke="#f5e100" stroke-width="3"/>

				<!-- tower 2 -->
				<path d="M1266 834l6-3h18l6 3-12 4h-10z" fill="#b38474"/>
				<path d="M1270 835V268q1-6 6-6h9q5 1 5 6v567z" fill="url(#tower)"/>
				<g id="landing">
					<path d="M1268 311v47" stroke="#0a7fae" stroke-width="3"/>
					<path d="M1272 312v46M1274 310v7M1274 338v16" stroke="#17b4e6" stroke-dasharray="5 2"/>
					<path d="M1261 306v8M1265 304v8" stroke="#aaa" stroke-dasharray="2 2"/>
					<path d="M1261 318h5v3h-5z" fill="#ddd"/>
					<path d="M1290 306h7v10l-3 2M1290 318h3" fill="none" stroke="#aaa" stroke-dasharray="4 2"/>
				</g>
				<use href="#landing" y="121"/>
				<use href="#landing" y="242"/>
				<use href="#landing" y="363"/>
				<g id="ladder">
					<path d="M1291 384v54M1295 384v54" stroke="#0a6488" stroke-width="1.5"/>
					<path d="M1293 384v54" stroke="#17b4e6" stroke-dasharray="1 4"/>
					<path d="M1266 382h25M1272 372h18" stroke="#c4c4c4" stroke-width="1.3"/>
					<path d="M1289 380l5-3 7 1-3 4-8 2z" fill="#d8d8d8"/>
					<path d="M1286 368v6M1289 368v5M1290 365l9 3v6" fill="none" stroke="#777" stroke-dasharray="2 2"/>
					<path d="M1291 438h6v-10" fill="none" stroke="#999"/>
				</g>
				<use href="#ladder" y="120"/>
				<use href="#ladder" y="241"/>
				<use href="#ladder" y="361"/>
				<path d="M1291 520l10-1q3 0 3 5v307l4 2" fill="none" stroke="#c2b000" stroke-width="2"/>
				<path d="M1291 520h11" stroke="#f5e100" stroke-width="2"/>
			</svg>
		</div>
		<div class="view-status"><span>n40e10d</span><span>Parallel</span><span>Model</span><span>Pan</span></div>
	</section>
</main>

<div class="statusbar"></div>

<footer class="taskbar">
	<div class="sys">
		<button aria-label="Start"><svg viewBox="0 0 20 20"><path d="M0 3l8-1v7H0zM9 2l11-2v9H9zM0 10h8v8l-8-1zM9 10h11v10L9 18z"/></svg></button>
		<button aria-label="Search"><svg viewBox="0 0 20 20"><circle cx="10" cy="10" r="8" fill="none" stroke="#000" stroke-width="2.5"/></svg></button>
		<button aria-label="Task view"><svg viewBox="0 0 20 20"><path d="M1 0v4h12V0M1 20v-4h12v4M1 7h12v6H1zM18 0v4M18 11v9" fill="none" stroke="#000" stroke-width="1.5"/><path d="M16 6h4v3h-4z"/></svg></button>
	</div>
	<button class="app run" aria-label="Edge"><svg viewBox="0 0 32 32"><circle cx="16" cy="16" r="15" fill="#1473c8"/><path d="M2 14C4 5 10 1 17 1c9 0 14 7 14 13 0 5-4 8-9 8-4 0-5-2-4-4 3-5-4-10-10-8-3 1-5 2-6 4z" fill="url(#edge1)"/><path d="M9 12c-3 9 3 18 14 17q5-2 7-6c-6 4-14 2-15-5q0-3 2-5-4-3-8-1z" fill="#0c4f9d"/><path d="M18 14q4 4 0 5 0 4 8 3l-5 2q-8-1-6-7z" fill="#d3e5ee"/></svg></button>
	<button class="app run multi" aria-label="Files"><svg viewBox="0 0 32 32"><path d="M2 4h12l3 4h-15z" fill="#dd9500"/><path d="M2 7h28v20H2z" fill="#ffd660"/><path d="M6 17h20v13h-5v-7H11v7H6z" fill="#3a94dd"/></svg></button>
	<button class="app run" aria-label="Music"><svg viewBox="0 0 32 32"><circle cx="16" cy="16" r="15" fill="#ffd800"/><path d="M12 4l9-3q-3 4-1 7l-4 1 4 13a5 5 0 1 1-5-3L10 8z" fill="#14b56b"/></svg></button>
	<button class="app run multi" aria-label="Word"><svg viewBox="0 0 32 32"><path d="M9 2h22v28H9z" fill="#2b7cd3"/><path d="M9 2h22v8H9z" fill="#41a5ee"/><path d="M9 22h22v8H9z" fill="#103f91"/><path d="M0 8h17v17H0z" fill="#185abd"/><text x="9" y="21" text-anchor="middle">W</text></svg></button>
	<button class="app run multi" aria-label="Excel"><svg viewBox="0 0 32 32"><path d="M9 2h22v28H9z" fill="#21a366"/><path d="M20 2h11v9H20z" fill="#33c481"/><path d="M9 16h22v14H9z" fill="#107c41"/><path d="M20 16h11v14H20z" fill="#185c37"/><path d="M0 8h17v17H0z" fill="#107c41"/><text x="9" y="21" text-anchor="middle">X</text></svg></button>
	<button class="app run orange" aria-label="Chat"><svg viewBox="0 0 32 32"><circle cx="16" cy="16" r="15" fill="#c3c8d2"/><path d="M5 12Q8 1 20 3q9 4 8 13-1 6-4 8l-4-2-2-9-9-2z" fill="#23252f"/><path d="M10 11l8 2 2 8-3 5-5-1-3-6z" fill="#c9aaa2"/><path d="M3 22l9 3 5 5q-10 1-14-8z" fill="#f3f3f3"/><path d="M17 26l7-3 2 3q-4 4-9 4z" fill="#4a4d5c"/></svg></button>
	<button class="app run" aria-label="Console"><svg viewBox="0 0 32 32"><path d="M2 5h28v22H2z" fill="#050505" stroke="#888"/><path d="M2 5h28v3H2z" fill="#ddd"/><path d="M5 10v3M8 10v3M11 13h5" stroke="#fff"/></svg></button>
	<button class="app run active" aria-label="AVEVA"><svg><use href="#aveva"/></svg></button>
	<button class="app run" aria-label="Vessel"><svg viewBox="0 0 32 32"><path d="M11 6q5-5 10 0v20q-5 5-10 0z" fill="#0a8a0a"/><path d="M8 10h16v2H8zM14 0h4v3h-4zM14 29h4v3h-4zM7 23h4v3H7zM21 12h3v3h-3z" fill="#f00"/></svg></button>
	<button class="app run pid" aria-label="P&amp;ID"><svg viewBox="0 0 32 32"><path d="M0 0h32v32H0z" fill="#c58a3c"/><path d="M2 14a11 11 0 0 1 20-6M4 9h17M12 1q-5 5-4 12M13 1q5 4 3 11M2 14q3-2 6-1" fill="none" stroke="#222" stroke-width="1.5"/><path d="M1 30Q6 13 30 14" stroke="#6e4412" fill="none"/><text x="16" y="27" text-anchor="middle">P&amp;ID</text></svg></button>

	<div class="tray">
		<svg class="plug" viewBox="0 0 12 26"><path d="M2 1h2v6h4V1h2v6h2v6q0 4-4 5v7H5v-7q-4-1-4-5V7h1z" fill="#fff" stroke="#666"/></svg>
		<span class="charge">98%</span>
		<svg class="w16" viewBox="0 0 16 16"><path d="M1 12l7-8 7 8" fill="none" stroke="#000" stroke-width="1.5"/></svg>
		<svg class="w20" viewBox="0 0 20 20"><circle cx="10" cy="10" r="9.5" fill="#f9a052"/><path d="M3 8h3l4-3v10l-4-3H3zM12 7q2 3 0 6M14 5q4 5 0 10" fill="none" stroke="#fff" stroke-width="1.4"/></svg>
		<svg class="w20" viewBox="0 0 20 20"><path d="M5 6h13v9H5z" fill="#000"/><path d="M18 8h2v5h-2M4 4H1v4h4V4M2 4V2M4 4V2M3 8v6" fill="none" stroke="#000"/></svg>
		<svg class="w16" viewBox="0 0 16 16"><path d="M1 15Q2 3 15 2M5 15q1-8 10-9M9 15q1-4 6-5" fill="none" stroke="#000"/><circle cx="14" cy="14" r="1.5"/></svg>
		<svg class="w20" viewBox="0 0 20 20"><path d="M1 7h4l4-4v14l-4-4H1zM12 7q2 3 0 6" fill="none" stroke="#000"/><path d="M14 5q4 5 0 10M17 3q5 7 0 14" fill="none" stroke="#999"/></svg>
		<span class="ime">英</span>
		<time class="clock">22:22<br>2021/8/5</time>
		<span class="note"><svg viewBox="0 0 24 24"><path d="M1 2h20v15h-9l-5 5v-5H1z"/><path d="M4 6h14M4 9h14M4 12h10" stroke="#d5dcea" stroke-width="1.5"/></svg><em>1</em></span>
	</div>
</footer>

</body>
</html>
```
FILE: styles.css
```
* {
	box-sizing: border-box;
	margin: 0;
	padding: 0;
}

body {
	display: flex;
	flex-direction: column;
	height: 100vh;
	overflow: hidden;
	background: #bfdbff;
	color: #1a1a1a;
	font-family: "Noto Sans", "Open Sans", sans-serif;
	font-size: 15px;
}

button, select, input {
	font: inherit;
	color: inherit;
	border: none;
	border-radius: 0;
	background: none;
}

select {
	appearance: none;
	width: 100%;
	height: 100%;
}

svg {
	display: block;
	flex: none;
}

.sprite {
	position: absolute;
	width: 0;
	height: 0;
}

.ico {
	width: 20px;
	height: 20px;
}

/* title bar */
.titlebar {
	display: flex;
	align-items: center;
	height: 29px;
	padding: 0 4px 2px 2px;
	background: #fff;
	color: #000;
	flex: none;
}

.titlebar h1 {
	flex: 1;
	margin-left: 5px;
	font-family: "Open Sans", sans-serif;
	font-size: 16px;
	font-weight: 400;
	line-height: 24px;
}

.winctl {
	display: flex;
}

.winctl button {
	display: flex;
	align-items: center;
	justify-content: center;
	width: 58px;
	height: 26px;
}

.winctl svg {
	width: 13px;
	height: 13px;
	fill: none;
	stroke: #000;
	stroke-width: 1;
}

/* menu */
.menubar {
	display: flex;
	align-items: center;
	height: 27px;
	padding-left: 2px;
	border-top: 1px solid #9dbce4;
	font-size: 16px;
	flex: none;
}

.menubar button {
	height: 24px;
	margin-right: 1px;
	padding: 0 5px;
	line-height: 24px;
}

.menubar button:disabled {
	color: #8190a4;
}

.mdictl {
	display: flex;
	gap: 11px;
	margin-left: auto;
	padding-right: 4px;
}

.mdictl svg {
	width: 10px;
	height: 10px;
	fill: none;
	stroke: #56657a;
	stroke-width: 2;
}

.grip {
	flex: none;
	width: 3px;
	height: 24px;
	margin: 0 4px 0 3px;
	background: repeating-linear-gradient(#6a93d4 0 3px, transparent 3px 6px);
}

/* toolbars */
.toolbars {
	position: relative;
	display: flex;
	flex-direction: column;
	gap: 1px;
	height: 142px;
	flex: none;
}

.row {
	display: flex;
	gap: 4px;
	padding-left: 2px;
}

.bar {
	display: flex;
	align-items: center;
	height: 35px;
	border-bottom: 2px solid #86afe6;
	border-radius: 3px;
	background: linear-gradient(#e0edff, #cfe2ff 50%, #b7d4fb);
}

.tb {
	display: flex;
	align-items: center;
	justify-content: center;
	width: 30px;
	height: 30px;
}

.tb svg {
	width: 20px;
	height: 20px;
}

.tb.sm {
	width: 24px;
}

.tb.sm svg {
	width: 16px;
	height: 16px;
}

.rename {
	color: #888;
	font-size: 14px;
}

.auto {
	width: 52px;
	height: 28px;
	border: 1px solid #a08049;
	border-radius: 2px;
	background: linear-gradient(#fcd39c, #f9b356 50%, #ffd98c);
}

.swatch {
	width: 20px;
	height: 20px;
	margin: 0 3px;
	background: #777;
}

.dd {
	width: 0;
	margin: 0 4px;
	border: 4px solid transparent;
	border-top: 5px solid #2a5aa8;
	border-bottom: none;
}

.dd.off {
	border-top-color: #9a9a9a;
}

.combo {
	position: relative;
	height: 26px;
	border: 2px solid #b6cdec;
	background: #eaf2fc;
}

.combo select {
	padding: 0 3px;
}

.combo::after {
	content: '';
	position: absolute;
	top: 9px;
	right: 4px;
	border: 5px solid transparent;
	border-top: 6px solid #4a7ab8;
	border-bottom: none;
	pointer-events: none;
}

.combo.off {
	border-color: #c9c9c9;
	background: #ececec;
	color: #aaa;
}

.combo.off::after {
	border-top-color: #aaa;
}

.combo.off select {
	opacity: 1;
}

.soli {
	width: 63px;
}

.local {
	width: 140px;
}

.nolist {
	width: 182px;
}

.ce {
	width: 338px;
	padding-right: 3px;
}

.ce label {
	margin: 0 3px 0 13px;
	color: #24457c;
}

.cebox,
.fbox {
	position: relative;
	height: 26px;
	border: 1px solid #767676;
	background: #fff;
	font-family: Roboto, sans-serif;
	font-size: 14px;
}

.cebox {
	flex: 1;
}

.cebox select,
.fbox select {
	padding: 0 3px;
}

.cebox svg,
.fbox svg {
	position: absolute;
	top: 7px;
	right: 5px;
	width: 11px;
	height: 11px;
	pointer-events: none;
}

.spec {
	width: 270px;
	height: 26px;
	padding: 0 5px;
	border: 1px solid #b0c6e6;
	background: #eaf2fc;
}

.slider {
	position: absolute;
	top: 100px;
	right: 0;
	z-index: 2;
	width: 10px;
	height: 64px;
	border: 2px solid #666;
	border-radius: 5px;
	background: linear-gradient(#d5e5fb 60%, #ff7a1a 60%);
}

/* work area */
.work {
	display: flex;
	flex: 1;
	min-height: 0;
}

.dock {
	display: flex;
	flex-direction: column;
	width: 288px;
	padding-right: 1px;
	border-right: 2px solid #3a4fa8;
	background: #c5daf9;
	flex: none;
}

.dock-head,
.filter,
.explorer {
	width: 282px;
	border-right: 2px solid #3044a0;
}

.dock-head {
	display: flex;
	align-items: center;
	height: 30px;
	padding: 0 7px 0 0;
	background: linear-gradient(#dbe9ff, #b5cff6 50%, #86aae2);
	flex: none;
}

.dock-head h2 {
	flex: 1;
	margin-left: 3px;
	color: #000;
	font-family: "DejaVu Serif", serif;
	font-size: 14px;
	font-weight: 700;
}

.dock-head button {
	margin-left: 12px;
}

.dock-head svg {
	width: 11px;
	height: 12px;
}

.filter {
	display: flex;
	align-items: center;
	height: 32px;
	padding-left: 11px;
	border-bottom: 1px solid #888;
	background: #dce9fd;
	font-family: Roboto, sans-serif;
	font-size: 14px;
	flex: none;
}

.filter input {
	appearance: none;
	width: 16px;
	height: 16px;
	margin: 0 4px 0 13px;
	border: 1px solid #333;
	background: #fff;
}

.fbox {
	width: 144px;
	border-color: #adadad;
	background: #e1e1e1;
}

.explorer {
	display: grid;
	grid-template-columns: 1fr 20px;
	grid-template-rows: 1fr 20px;
	flex: 1;
	min-height: 0;
	padding: 0 0 2px 1px;
	background: #f0f0f0;
}

/* tree */
.tree {
	overflow: hidden;
	background: #fff;
	color: #1a1a1a;
	font-family: Lato, sans-serif;
	font-weight: 700;
}

.tree ul {
	margin-left: 24px;
}

.tree li {
	list-style: none;
}

.tree li li {
	background: repeating-linear-gradient(#a0a0a0 0 1px, transparent 1px 2px) 11px 0 / 1px 100% no-repeat;
}

.tree li.last {
	background-size: 1px 10px;
}

.tree div {
	display: flex;
	align-items: center;
	height: 20px;
}

.tree svg {
	width: 20px;
	height: 20px;
	margin-top: 3px;
}

.tree span {
	margin-left: 4px;
	padding: 0 2px;
	line-height: 18px;
}

.tree b {
	display: flex;
	align-items: center;
	width: 23px;
	height: 20px;
	background: repeating-linear-gradient(90deg, #a0a0a0 0 1px, transparent 1px 2px) 11px 10px / 12px 1px no-repeat;
}

.box::before {
	content: '\2212';
	width: 11px;
	height: 11px;
	margin-left: 6px;
	border: 1px solid #919191;
	border-radius: 2px;
	background: #f4f4f4;
	color: #3050a0;
	font: 11px/9px "DejaVu Sans", sans-serif;
	text-align: center;
}

.box.plus::before {
	content: '+';
}

.tree .root {
	font-weight: 400;
}

.tree .sel {
	background: #0078d7;
	color: #fff;
}

.vscroll {
	display: flex;
	flex-direction: column;
	align-items: center;
	padding: 6px 0;
}

.vscroll svg,
.hscroll svg {
	width: 11px;
	height: 11px;
}

.vscroll i {
	width: 19px;
	height: 130px;
	margin: 101px 0 auto;
	background: #cdcdcd;
}

.up {
	transform: rotate(180deg);
}

.hscroll {
	display: flex;
	align-items: center;
	padding: 0 6px 0 5px;
}

.hscroll i {
	width: 136px;
	height: 19px;
	margin: 0 auto 0 5px;
	background: #cdcdcd;
}

.left {
	transform: rotate(90deg);
}

.right {
	transform: rotate(-90deg);
}

/* 3d view */
.view {
	display: grid;
	grid-template-columns: 35px 1fr;
	grid-template-rows: 30px 1fr 24px;
	flex: 1;
	min-width: 0;
	padding-right: 8px;
	border-top: 2px solid #777;
	border-left: 2px solid #8a95a8;
	background: #c5daf9;
	font-family: Roboto, sans-serif;
	font-size: 14px;
}

.nav-label {
	grid-column: 1 / 3;
	padding: 8px 0 0 10px;
}

.view-tools {
	display: flex;
	flex-direction: column;
	gap: 7px;
	padding: 1px 0 0 8px;
}

.view-tools button {
	display: flex;
	align-items: center;
	justify-content: center;
	width: 24px;
	height: 24px;
}

.view-tools .gap {
	margin-top: 3px;
}

.view-tools .on {
	border: 2px solid #2b3fa0;
	background: #ffb968;
}

.view-tools svg {
	width: 20px;
	height: 20px;
}

.canvas {
	min-height: 0;
	background: #000;
	border-bottom: 1px solid #888;
}

.canvas svg {
	width: 100%;
	height: 100%;
}

.view-status {
	grid-column: 2;
	display: flex;
	padding: 1px 0 0 2px;
}

.view-status span {
	width: 60px;
}

.view-status span:first-child {
	width: 120px;
}

.view-status span:nth-child(2) {
	width: 90px;
}

.statusbar {
	height: 28px;
	border-top: 2px solid #6888bd;
	border-bottom: 2px solid #8fa9d4;
	background: linear-gradient(#d5e5fc, #aacbf4 45%, #cfe2fd);
	flex: none;
}

/* taskbar */
.taskbar {
	display: flex;
	height: 50px;
	background: linear-gradient(90deg, #cee4ed, #cfe6ee 55%, #d4deea 75%, #d6d9e8);
	color: #000;
	flex: none;
}

.taskbar button {
	display: flex;
	align-items: center;
	justify-content: center;
}

.sys {
	display: flex;
	margin-right: 3px;
}

.sys button {
	width: 60px;
}

.sys svg {
	width: 20px;
	height: 20px;
}

.app {
	width: 62px;
}

.app svg {
	width: 31px;
	height: 31px;
}

.app text {
	fill: #fff;
	font: 700 13px "Open Sans", sans-serif;
}

.pid text {
	fill: #222;
	font-size: 11px;
}

.run {
	background: linear-gradient(#2b93d0, #2b93d0) 6px 47px / 51px 3px no-repeat;
}

.run.multi {
	background: linear-gradient(90deg, #2b93d0 41px, #82bde0 41px) 6px 47px / 51px 3px no-repeat;
}

.run.active {
	background: linear-gradient(#ecf4f8 47px, #2b93d0 47px);
}

.run.orange {
	background: linear-gradient(#f6b27b 47px, #ff7300 47px);
}

.tray {
	display: flex;
	align-items: center;
	margin-left: auto;
	margin-right: 5px;
	padding-right: 25px;
	border-right: 1px solid #a9b3c4;
}

.plug {
	width: 12px;
	height: 25px;
	margin-right: 2px;
}

.charge {
	width: 45px;
	margin-right: 8px;
	border: 1px solid #666;
	border-radius: 2px;
	outline: 2px solid #fff;
	outline-offset: -3px;
	background: #16994a;
	color: #fff;
	font-family: "Open Sans", sans-serif;
	font-size: 12px;
	line-height: 22px;
	text-align: center;
}

.w16,
.w20 {
	width: 16px;
	height: 16px;
	margin-right: 11px;
}

.w20 {
	width: 20px;
	height: 20px;
}

.ime {
	font-family: "Noto Sans CJK SC", sans-serif;
	font-size: 18px;
}

.clock {
	width: 102px;
	font-family: "Open Sans", sans-serif;
	font-size: 16px;
	line-height: 23px;
	text-align: center;
}

.note {
	position: relative;
	width: 32px;
	padding-left: 10px;
}

.note svg {
	width: 22px;
	height: 22px;
}

.note em {
	position: absolute;
	top: 6px;
	left: 20px;
	width: 20px;
	height: 20px;
	border: 1px solid #888;
	border-radius: 10px;
	background: #ccced6;
	font-size: 14px;
	font-style: normal;
	line-height: 18px;
	text-align: center;
}
```
